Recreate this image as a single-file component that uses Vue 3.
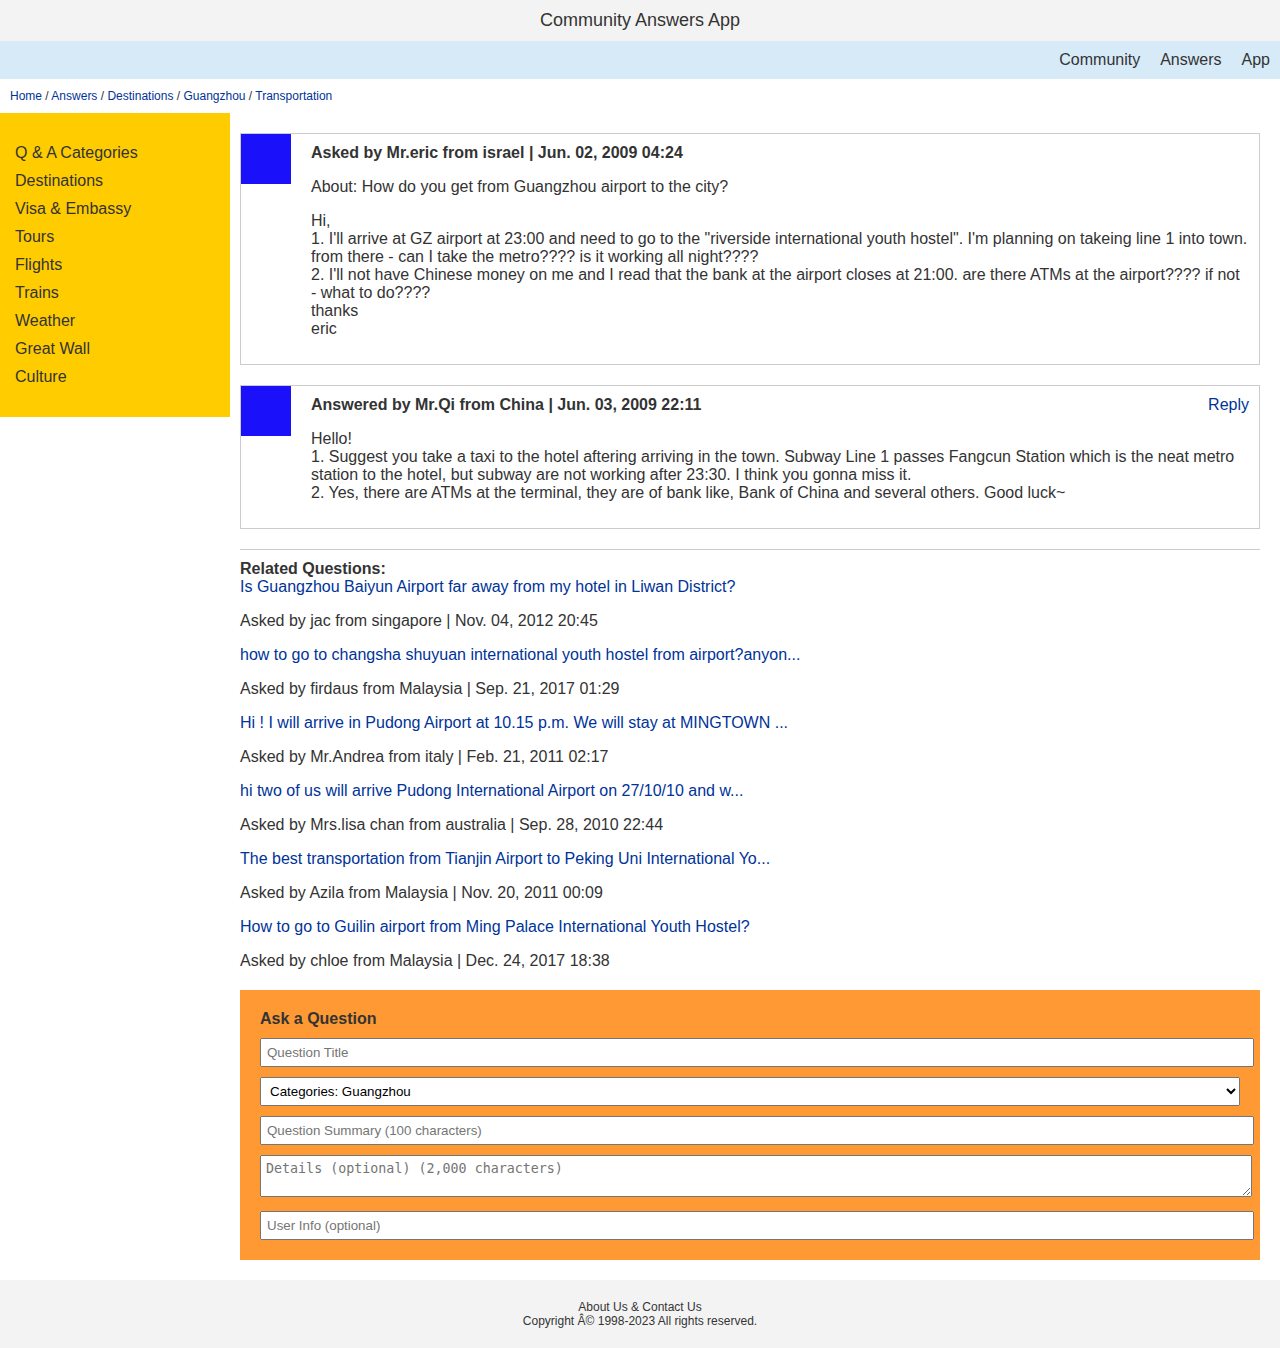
<script setup>
const nav = ['Community', 'Answers', 'App']
const crumbs = ['Home', 'Answers', 'Destinations', 'Guangzhou', 'Transportation']
const categories = ['Q & A Categories', 'Destinations', 'Visa & Embassy', 'Tours', 'Flights', 'Trains', 'Weather', 'Great Wall', 'Culture']
const related = [
  { title: 'Is Guangzhou Baiyun Airport far away from my hotel in Liwan District?', by: 'Asked by jac from singapore | Nov. 04, 2012 20:45' },
  { title: 'how to go to changsha shuyuan international youth hostel from airport?anyon...', by: 'Asked by firdaus from Malaysia | Sep. 21, 2017 01:29' },
  { title: 'Hi ! I will arrive in Pudong Airport at 10.15 p.m. We will stay at MINGTOWN ...', by: 'Asked by Mr.Andrea from italy | Feb. 21, 2011 02:17' },
  { title: 'hi two of us will arrive Pudong International Airport on 27/10/10 and w...', by: 'Asked by Mrs.lisa chan from australia | Sep. 28, 2010 22:44' },
  { title: 'The best transportation from Tianjin Airport to Peking Uni International Yo...', by: 'Asked by Azila from Malaysia | Nov. 20, 2011 00:09' },
  { title: 'How to go to Guilin airport from Ming Palace International Youth Hostel?', by: 'Asked by chloe from Malaysia | Dec. 24, 2017 18:38' },
]
</script>

<template>
  <div class="page">
    <header class="title">Community Answers App</header>
    <nav class="topnav">
      <a v-for="item in nav" :key="item" href="#">{{ item }}</a>
    </nav>
    <nav class="crumbs" aria-label="Breadcrumb">
      <template v-for="(item, i) in crumbs" :key="item"><template v-if="i"> / </template><a href="#">{{ item }}</a></template>
    </nav>

    <div class="columns">
      <aside class="sidebar">
        <ul>
          <li v-for="item in categories" :key="item"><a href="#">{{ item }}</a></li>
        </ul>
      </aside>

      <main class="content">
        <article class="post">
          <div class="avatar"></div>
          <div class="body">
            <strong>Asked by Mr.eric from israel | Jun. 02, 2009 04:24</strong>
            <p>About: How do you get from Guangzhou airport to the city?</p>
            <p>
              Hi,<br>
              1. I'll arrive at GZ airport at 23:00 and need to go to the "riverside international youth hostel". I'm planning on takeing line 1 into town. from there - can I take the metro???? is it working all night????<br>
              2. I'll not have Chinese money on me and I read that the bank at the airport closes at 21:00. are there ATMs at the airport???? if not - what to do????<br>
              thanks<br>
              eric
            </p>
          </div>
        </article>

        <article class="post">
          <div class="avatar"></div>
          <div class="body">
            <div class="post-head">
              <strong>Answered by Mr.Qi from China | Jun. 03, 2009 22:11</strong>
              <a href="#">Reply</a>
            </div>
            <p>
              Hello!<br>
              1. Suggest you take a taxi to the hotel aftering arriving in the town. Subway Line 1 passes Fangcun Station which is the neat metro station to the hotel, but subway are not working after 23:30. I think you gonna miss it.<br>
              2. Yes, there are ATMs at the terminal, they are of bank like, Bank of China and several others. Good luck~
            </p>
          </div>
        </article>

        <section class="related">
          <strong>Related Questions:</strong>
          <div v-for="q in related" :key="q.title" class="question">
            <a href="#">{{ q.title }}</a>
            <p>{{ q.by }}</p>
          </div>
        </section>

        <form class="ask" @submit.prevent>
          <strong>Ask a Question</strong>
          <input type="text" placeholder="Question Title" aria-label="Question Title">
          <select aria-label="Categories">
            <option>Categories: Guangzhou</option>
          </select>
          <input type="text" placeholder="Question Summary (100 characters)" aria-label="Question Summary">
          <textarea placeholder="Details (optional) (2,000 characters)" aria-label="Details"></textarea>
          <input type="text" placeholder="User Info (optional)" aria-label="User Info">
        </form>
      </main>
    </div>

    <footer class="footer">
      <div>About Us &amp; Contact Us</div>
      <div>Copyright Â© 1998-2023 All rights reserved.</div>
    </footer>
  </div>
</template>

<style>
body {
  margin: 0;
  background: #fff;
}
</style>

<style scoped>
.page {
  font-family: "Liberation Sans", Arial, sans-serif;
  font-size: 16px;
  line-height: 18px;
  color: #333;
}
a {
  color: #039;
  text-decoration: none;
}
.title {
  padding: 10px;
  background: #f3f3f3;
  font-size: 18px;
  line-height: 21px;
  text-align: center;
}
.topnav {
  display: flex;
  justify-content: flex-end;
  gap: 20px;
  padding: 10px;
  background: #d6eaf8;
}
.topnav a,
.sidebar a {
  color: #333;
}
.crumbs {
  padding: 10px;
  font-size: 12px;
  line-height: 14px;
}
.columns {
  display: flex;
  align-items: flex-start;
}
.sidebar {
  flex: none;
  box-sizing: border-box;
  width: 230px;
  padding: 31px 15px;
  background: #fc0;
}
.sidebar ul {
  display: flex;
  flex-direction: column;
  gap: 10px;
  margin: 0;
  padding: 0;
  list-style: none;
}
.content {
  flex: 1;
  min-width: 0;
  padding: 20px 20px 20px 10px;
}
.post {
  display: flex;
  align-items: flex-start;
  gap: 10px;
  margin-bottom: 20px;
  border: 1px solid #ccc;
}
.avatar {
  flex: none;
  width: 50px;
  height: 50px;
  background: #1b10fa;
}
.body {
  flex: 1;
  min-width: 0;
  padding: 10px;
}
p {
  margin: 16px 0;
}
.post-head {
  display: flex;
  justify-content: space-between;
}
.related {
  padding-top: 10px;
  border-top: 1px solid #ccc;
}
.ask {
  display: flex;
  flex-direction: column;
  margin-top: 20px;
  padding: 20px;
  background: #f93;
}
.ask strong {
  margin-bottom: 10px;
}
.ask input,
.ask select,
.ask textarea {
  width: 100%;
  margin: 0 0 10px;
  padding: 5px;
}
.ask input,
.ask select {
  font-family: "Liberation Sans", Arial, sans-serif;
}
.ask textarea {
  margin-bottom: 14px;
}
.ask input:last-child {
  margin-bottom: 0;
}
.footer {
  padding: 20px;
  background: #f3f3f3;
  font-size: 12px;
  line-height: 14px;
  text-align: center;
}
</style>
